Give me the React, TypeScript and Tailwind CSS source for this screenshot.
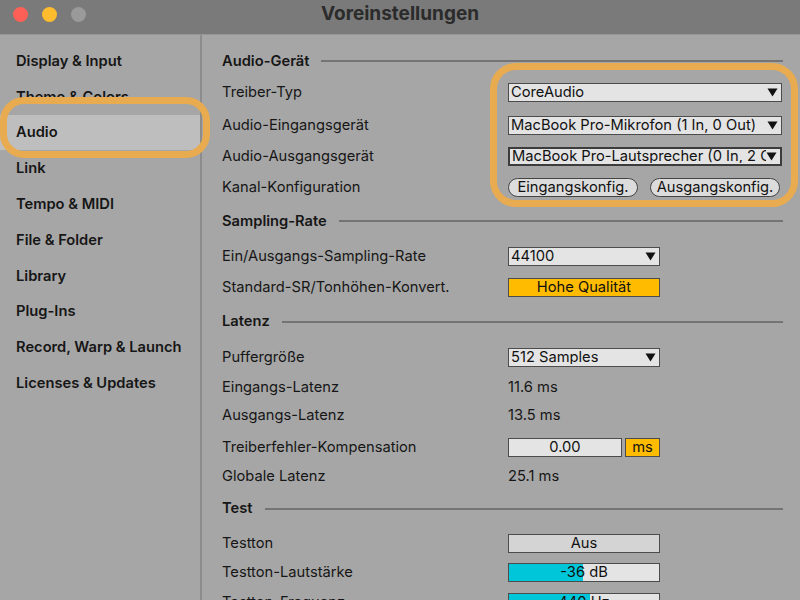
import React from "react";

const font = { fontFamily: "Inter, 'Noto Sans', 'Liberation Sans', sans-serif" };

function Tri() {
  return (
    <svg width="11" height="9" viewBox="0 0 11 9" className="shrink-0">
      <path d="M0.5 0.5 H10.5 L5.5 8.5 Z" fill="#111" />
    </svg>
  );
}

function Dropdown({ text, w, thick }: { text: string; w: string; thick?: boolean }) {
  return (
    <div
      className={`${w} h-[19px] flex items-center justify-between pl-[2px] pr-[3px] bg-[#e4e4e4] ${
        thick ? "border-2 border-[#3c3c3c]" : "border border-[#4c4c4c]"
      } text-[14.7px] leading-none text-[#111] whitespace-nowrap overflow-hidden`}
    >
      <span className="overflow-hidden">{text}</span>
      <Tri />
    </div>
  );
}

function Heading({ text, h }: { text: string; h: string }) {
  return (
    <div className={`${h} shrink-0 flex items-center gap-[12px]`}>
      <span className="text-[14.7px] font-semibold text-[#161616] whitespace-nowrap">{text}</span>
      <div className="flex-1 h-[2px] bg-[#747474]" />
    </div>
  );
}

function Row({ label, h, children }: { label: string; h: string; children?: React.ReactNode }) {
  return (
    <div className={`${h} shrink-0 flex items-center`}>
      <div className="w-[286px] shrink-0 text-[14.7px] text-[#161616] whitespace-nowrap">{label}</div>
      <div className="flex items-center">{children}</div>
    </div>
  );
}

function Slider({ pct, text }: { pct: number; text: string }) {
  return (
    <div className="relative w-[152px] h-[19px] border border-[#4c4c4c] bg-[#e4e4e4] overflow-hidden">
      <div className="absolute left-0 top-0 bottom-0 bg-[#00c6da]" style={{ width: `${pct}%` }} />
      <div className="relative h-full flex items-center justify-center text-[14.7px] leading-none text-[#111]">{text}</div>
    </div>
  );
}

const sidebar = [
  "Display & Input",
  "Theme & Colors",
  "Audio",
  "Link",
  "Tempo & MIDI",
  "File & Folder",
  "Library",
  "Plug-Ins",
  "Record, Warp & Launch",
  "Licenses & Updates",
];

export default function App() {
  return (
    <div className="relative w-[800px] h-[600px] overflow-hidden bg-[#a6a6a6] flex flex-col" style={font}>
      {/* Title bar */}
      <div className="relative h-[35px] shrink-0 bg-[#7a7a7a] border-b border-[#969696] flex items-center justify-center">
        <div className="absolute left-[13px] top-[7px] flex gap-[14px]">
          <div className="w-[15px] h-[15px] rounded-full bg-[#fe5f57]" />
          <div className="w-[15px] h-[15px] rounded-full bg-[#febc2e]" />
          <div className="w-[15px] h-[15px] rounded-full bg-[#9a9a9a]" />
        </div>
        <div className="text-[19px] font-bold text-[#2b2b2b] -mt-[6px]">Voreinstellungen</div>
      </div>

      <div className="flex flex-1 min-h-0">
        {/* Sidebar */}
        <div className="w-[202px] shrink-0 border-r-2 border-[#8c8c8c] pt-[8px]">
          {sidebar.map((s) => (
            <div
              key={s}
              className={`h-[35.8px] flex items-center pl-[16px] text-[14.7px] font-semibold text-[#161616] whitespace-nowrap ${
                s === "Audio" ? "bg-[#bebebe]" : ""
              }`}
            >
              {s}
            </div>
          ))}
        </div>

        {/* Main */}
        <div className="flex-1 pl-[20px] pr-[17px] pt-[11px] flex flex-col">
          <Heading text="Audio-Gerät" h="h-[30px]" />
          <Row label="Treiber-Typ" h="h-[32px]">
            <Dropdown text="CoreAudio" w="w-[274px]" />
          </Row>
          <Row label="Audio-Eingangsgerät" h="h-[33px] pt-[2px]">
            <Dropdown text="MacBook Pro-Mikrofon (1 In, 0 Out)" w="w-[274px]" />
          </Row>
          <Row label="Audio-Ausgangsgerät" h="h-[30px]">
            <Dropdown text="MacBook Pro-Lautsprecher (0 In, 2 Out)" w="w-[274px]" thick />
          </Row>
          <Row label="Kanal-Konfiguration" h="h-[33px]">
            <div className="flex gap-[12px]">
              <div className="w-[130px] h-[19px] rounded-full border border-[#444] bg-[#dcdcdc] flex items-center justify-center text-[14.7px] leading-none text-[#111]">
                Eingangskonfig.
              </div>
              <div className="w-[130px] h-[19px] rounded-full border border-[#444] bg-[#dcdcdc] flex items-center justify-center text-[14.7px] leading-none text-[#111]">
                Ausgangskonfig.
              </div>
            </div>
          </Row>
          <Heading text="Sampling-Rate" h="h-[34px]" />
          <Row label="Ein/Ausgangs-Sampling-Rate" h="h-[33px] pt-[4px]">
            <Dropdown text="44100" w="w-[152px]" />
          </Row>
          <Row label="Standard-SR/Tonhöhen-Konvert." h="h-[33px]">
            <div className="w-[152px] h-[19px] border border-[#4c4c4c] bg-[#ffbb00] flex items-center justify-center text-[14.7px] leading-none text-[#111]">
              Hohe Qualität
            </div>
          </Row>
          <Heading text="Latenz" h="h-[35px]" />
          <Row label="Puffergröße" h="h-[32px] pt-[4px]">
            <Dropdown text="512 Samples" w="w-[152px]" />
          </Row>
          <Row label="Eingangs-Latenz" h="h-[29px] pt-[3px]">
            <span className="text-[14.7px] text-[#161616]">11.6 ms</span>
          </Row>
          <Row label="Ausgangs-Latenz" h="h-[30px]">
            <span className="text-[14.7px] text-[#161616]">13.5 ms</span>
          </Row>
          <Row label="Treiberfehler-Kompensation" h="h-[31px] pt-[4px]">
            <div className="flex gap-[3px]">
              <div className="w-[114px] h-[19px] border border-[#4c4c4c] bg-[#e4e4e4] flex items-center justify-center text-[14.7px] leading-none text-[#111]">
                0.00
              </div>
              <div className="w-[35px] h-[19px] border border-[#4c4c4c] bg-[#ffbb00] flex items-center justify-center text-[14.7px] leading-none text-[#111]">
                ms
              </div>
            </div>
          </Row>
          <Row label="Globale Latenz" h="h-[31px]">
            <span className="text-[14.7px] text-[#161616]">25.1 ms</span>
          </Row>
          <Heading text="Test" h="h-[33px]" />
          <Row label="Testton" h="h-[32px] pt-[4px]">
            <div className="w-[152px] h-[19px] border border-[#4c4c4c] bg-[#d4d4d4] flex items-center justify-center text-[14.7px] leading-none text-[#111]">
              Aus
            </div>
          </Row>
          <Row label="Testton-Lautstärke" h="h-[30px]">
            <Slider pct={49} text="-36 dB" />
          </Row>
          <Row label="Testton-Frequenz" h="h-[30px]">
            <Slider pct={54} text="440 Hz" />
          </Row>
        </div>
      </div>

      {/* Orange highlight rings */}
      <div className="absolute left-[0px] top-[97px] w-[210px] h-[61px] border-[7px] border-[#e9ab4f] rounded-[24px] pointer-events-none" />
      <div className="absolute left-[490px] top-[63px] w-[308px] h-[144px] border-[7px] border-[#e9ab4f] rounded-[26px] pointer-events-none" />
    </div>
  );
}
